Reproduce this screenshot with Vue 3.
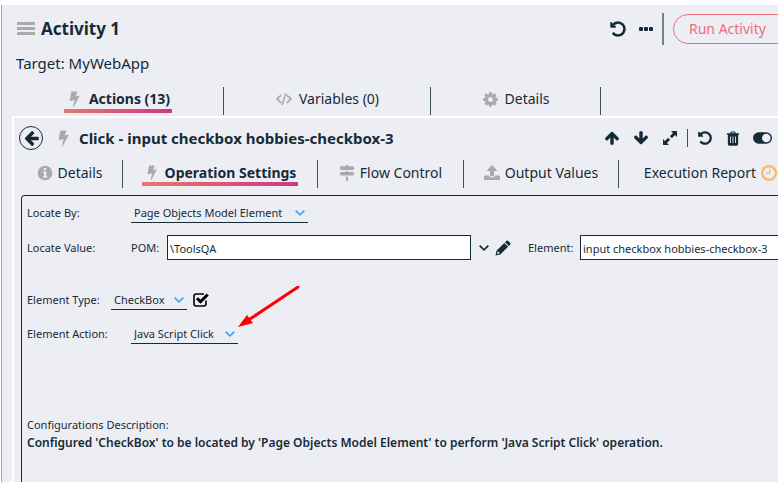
<script setup>
import { h, ref } from 'vue'

const icons = {
  bars: [18, 14, 'M0 0h18v3H0zM0 5h18v3H0zM0 10h18v3H0z'],
  bolt: [16, 16, 'M5.500.500h4.600q.700 0 .500.600L9 5l3.200-.6q.7 0 .4.700L7.200 15.300q-.6.600-.7-.2L8 8.400l-3.900.9q-.7 0-.6-.6L4.900 1q.1-.5.600-.5z'],
  undo: [1792, 1792, 'M1664 896q0 156-61 298t-164 245-245 164-298 61q-172 0-327-72.5t-264-204.5q-7-10-6.5-22.5t8.5-20.5l137-138q10-9 25-9 16 2 23 12 73 95 179 147t225 52q104 0 198.5-40.5t163.5-109.5 109.5-163.5 40.5-198.5-40.5-198.5-109.5-163.5-163.5-109.5-198.5-40.5q-98 0-188 35.5t-160 101.5l137 138q31 30 14 69-17 40-59 40h-448q-26 0-45-19t-19-45v-448q0-42 40-59 39-17 69 14l130 129q107-101 244.5-156.5t284.5-55.5q156 0 298 61t245 164 164 245 61 298z'],
  dots: [14, 4, 'M1 0h2q1 0 1 1v2q0 1-1 1H1Q0 4 0 3V1Q0 0 1 0zM6 0h2q1 0 1 1v2q0 1-1 1H6Q5 4 5 3V1Q5 0 6 0zM11 0h2q1 0 1 1v2q0 1-1 1h-2q-1 0-1-1V1q0-1 1-1z'],
  cog: [1792, 1792, 'M1152 896q0-106-75-181t-181-75-181 75-75 181 75 181 181 75 181-75 75-181zm512-109v222q0 12-8 23t-20 13l-185 28q-19 54-39 91 35 50 107 138 10 12 10 25t-9 23q-27 37-99 108t-94 71q-12 0-26-9l-138-108q-44 23-91 38-16 136-29 186-7 28-36 28h-222q-14 0-24.5-8.5t-11.5-21.5l-28-184q-49-16-90-37l-141 107q-10 9-25 9-14 0-25-11-126-114-165-168-7-10-7-23 0-12 8-23 15-21 51-66.5t54-70.5q-27-50-41-99l-183-27q-13-2-21-12.5t-8-23.5v-222q0-12 8-23t19-13l186-28q14-46 39-92-40-57-107-138-10-12-10-24 0-10 9-23 26-36 98.5-107.5t94.5-71.5q13 0 26 10l138 107q44-23 91-38 16-136 29-186 7-28 36-28h222q14 0 24.5 8.5t11.5 21.5l28 184q49 16 90 37l142-107q9-9 24-9 13 0 25 10 129 119 165 170 7 8 7 22 0 12-8 23-15 21-51 66.5t-54 70.5q26 50 41 98l183 28q13 2 21 12.5t8 23.5z'],
  code: [18, 14, 'M5.600 2.600l1.100 1.100L3.200 7l3.500 3.300-1.100 1.100L.7 7zM12.400 2.600l-1.100 1.100L14.800 7l-3.500 3.300 1.100 1.100L17.300 7zM10.200.8l1.500.4-3.900 12-1.500-.4z'],
  up: [1792, 1792, 'M1675 971q0 51-37 90l-75 75q-38 38-91 38-54 0-90-38l-294-293v704q0 52-37.5 84.5t-90.5 32.5h-128q-53 0-90.5-32.5t-37.5-84.5v-704l-294 293q-36 38-90 38t-90-38l-75-75q-38-38-38-90 0-53 38-91l651-651q35-37 90-37 54 0 91 37l651 651q37 39 37 91z'],
  expand: [16, 16, 'M9 1h5.500q.5 0 .5.500V7l-2-1.900-3.100 3.100-2-2L11 3zM7 15H1.500Q1 15 1 14.500V9l2 1.900 3.100-3.100 2 2L5 13z'],
  trash: [14, 16, 'M4 2.500L4.800.800Q5 .400 5.500.400h3q.5 0 .7.400L10 2.500h3.500v1.400h-1v9.700q0 2-1.700 2H3.200q-1.700 0-1.700-2V3.900h-1V2.500zM5.300 2.500h3.400l-.5-1H5.800zM3.800 5.800v7h.9v-7zM6.500 5.800v7h.9v-7zM9.300 5.800v7h.9v-7z'],
  toggle: [20, 12, 'M6 0h8a6 6 0 0 1 0 12H6A6 6 0 0 1 6 0zM14 1.500a4.500 4.500 0 1 0 0 9 4.500 4.500 0 0 0 0-9z'],
  info: [16, 16, 'M8 .700a7.300 7.300 0 1 0 0 14.600A7.300 7.300 0 0 0 8 .700zM6.900 3h2.300v2.200H6.900zM6 6.500h3.300v4.700h1v1.600H6v-1.600h1V8H6z'],
  signs: [16, 16, 'M7 0h2v1.300h5L15.700 3.200 14 5H1.300V1.300H7zM7 5.900h2v1h5.700v3.700H2L.3 8.700 2 6.900h5zM7 11.500h2V16H7z'],
  upload: [16, 16, 'M8 0l5 5.200q.3.800-.6.800H10v5.200H6V6H3.600Q2.700 6 3 5.200zM1 10.500h4q.3 1.900 2 1.900h2q1.700 0 2-1.900h4q1 0 1 1V14q0 1-1 1H1q-1 0-1-1v-2.500q0-1 1-1z'],
  clock: [16, 16, 'M8 0a8 8 0 1 0 0 16A8 8 0 0 0 8 0zM8 2.200a5.800 5.800 0 1 1 0 11.600A5.800 5.800 0 0 1 8 2.200zM8 4h1.300v5H5V7.700h3z'],
  chevron: [10, 6, 'M1.300 0L5 3.700 8.700 0 10 1.300l-5 4.700-5-4.700z'],
  pencil: [16, 16, 'M11.500.8q.8-.6 1.600 0l2.200 2.300q.6.8 0 1.500L13.900 6 10 2.200zM9.300 3l3.800 3.800-7.800 7.800L.5 15.500l1-4.700zM2.600 11.500l-.5 2.400 2.400-.5v-1H3.600v-.9z'],
  checked: [16, 14, 'M3 0h8q1 0 1.800.6L11.500 2H3.200Q2 2 2 3.200v7.600Q2 12 3.200 12h7.600q1.200 0 1.200-1.200V8.500L13.700 7v4q0 2.800-2.700 2.800H3Q.2 13.800.2 11V3Q.2 0 3 0zM3.200 5.700L5.300 3.600 7.600 5.900 13.600.4 15.900 2.600 7.600 10.900z']
}

const Icon = ({ name }) => {
  const [w, ht, d] = icons[name]
  return h('svg', { viewBox: `0 0 ${w} ${ht}`, fill: 'currentColor', 'aria-hidden': 'true' }, [
    h('path', { d, 'fill-rule': 'evenodd' })
  ])
}
Icon.props = ['name']

const activityTabs = [
  { icon: 'bolt', label: 'Actions (13)', active: true },
  { icon: 'code', label: 'Variables (0)' },
  { icon: 'cog', label: 'Details' }
]
const actionTabs = [
  { icon: 'info', label: 'Details' },
  { icon: 'bolt', label: 'Operation Settings', active: true },
  { icon: 'signs', label: 'Flow Control' },
  { icon: 'upload', label: 'Output Values' },
  { label: 'Execution Report', trailing: 'clock' }
]

const locateBy = ref('Page Objects Model Element')
const pom = ref('\\ToolsQA')
const element = ref('input checkbox hobbies-checkbox-3')
const elementType = ref('CheckBox')
const elementAction = ref('Java Script Click')
</script>

<template>
  <main class="activity">
    <header class="head">
      <Icon name="bars" class="icon grey bars" />
      <h1>Activity 1</h1>
      <div class="head-tools">
        <button class="tool" aria-label="Undo"><Icon name="undo" class="icon i18" /></button>
        <button class="tool" aria-label="More"><Icon name="dots" class="icon dots" /></button>
        <button class="run">Run Activity</button>
      </div>
    </header>
    <p class="target">Target: MyWebApp</p>

    <nav class="tabs outer">
      <div v-for="t in activityTabs" :key="t.label" class="cell">
        <button class="tab" :class="{ active: t.active }">
          <Icon :name="t.icon" class="icon grey" :class="t.icon === 'code' ? 'i18' : 'i17'" />{{ t.label }}
        </button>
      </div>
    </nav>

    <section class="action">
      <header class="action-head">
        <button class="back" aria-label="Back"><Icon name="up" class="icon i17 left" /></button>
        <Icon name="bolt" class="icon grey i17" />
        <h2>Click - input checkbox hobbies-checkbox-3</h2>
        <div class="action-tools">
          <button class="tool" aria-label="Move up"><Icon name="up" class="icon i16" /></button>
          <button class="tool" aria-label="Move down"><Icon name="up" class="icon i16 down" /></button>
          <button class="tool" aria-label="Expand"><Icon name="expand" class="icon i16" /></button>
          <span class="rule"></span>
          <button class="tool" aria-label="Undo"><Icon name="undo" class="icon i16" /></button>
          <button class="tool" aria-label="Delete"><Icon name="trash" class="icon trash" /></button>
          <button class="tool" aria-label="Active"><Icon name="toggle" class="icon toggle" /></button>
        </div>
      </header>

      <nav class="tabs inner">
        <div v-for="t in actionTabs" :key="t.label" class="cell">
          <button class="tab" :class="{ active: t.active }">
            <Icon v-if="t.icon" :name="t.icon" class="icon grey i16" />{{ t.label }}
            <Icon v-if="t.trailing" :name="t.trailing" class="icon orange i16" />
          </button>
        </div>
      </nav>

      <form class="settings" @submit.prevent>
        <div class="row">
          <label class="name" for="locate-by">Locate By:</label>
          <span class="pick wide">
            <select id="locate-by" v-model="locateBy"><option>Page Objects Model Element</option></select>
            <Icon name="chevron" class="icon chev blue" />
          </span>
        </div>
        <div class="row values">
          <span class="name">Locate Value:</span>
          <label class="pom" for="pom">POM:</label>
          <input id="pom" v-model="pom" class="box pom-box" type="text">
          <button class="tool open" type="button" aria-label="Open list"><Icon name="chevron" class="icon chev" /></button>
          <button class="tool edit" type="button" aria-label="Edit"><Icon name="pencil" class="icon i16" /></button>
          <label class="elem" for="element">Element:</label>
          <input id="element" v-model="element" class="box elem-box" type="text">
        </div>
        <div class="row type">
          <label class="name short" for="type">Element Type:</label>
          <span class="pick small">
            <select id="type" v-model="elementType"><option>CheckBox</option></select>
            <Icon name="chevron" class="icon chev blue" />
          </span>
          <svg class="icon checked" viewBox="0 0 16 14" fill="none" stroke="#000" aria-hidden="true">
            <path d="M13 7.500V11q0 2-2 2H3q-2 0-2-2V3q0-2 2-2h8" stroke-width="1.600" />
            <path d="M4 5.200l3.500 3.500L14.700 1.500" stroke-width="3" />
          </svg>
        </div>
        <div class="row">
          <label class="name" for="act">Element Action:</label>
          <span class="pick medium">
            <select id="act" v-model="elementAction"><option>Java Script Click</option></select>
            <Icon name="chevron" class="icon chev blue" />
            <svg class="pointer" viewBox="0 0 62 42" aria-hidden="true">
              <path d="M60 1L12 33" stroke="#f00" stroke-width="3" stroke-linecap="round" />
              <path d="M0 41L9 29 15 37z" fill="#f00" />
            </svg>
          </span>
        </div>
        <div class="summary">
          <p>Configurations Description:</p>
          <p><strong>Configured 'CheckBox' to be located by 'Page Objects Model Element' to perform 'Java Script Click' operation.</strong></p>
        </div>
      </form>
    </section>
  </main>
</template>

<style>
body {
  background: #fff;
  overflow: hidden;
}
</style>

<style scoped>
* {
  box-sizing: border-box;
}
.activity {
  margin: 5px 0 0 1px;
  min-height: calc(100vh - 5px);
  border-left: 1px solid #a3a5aa;
  background: #edeef4;
  color: #152b37;
  font: 14px/20px "Noto Sans", "Open Sans", sans-serif;
  display: flex;
  flex-direction: column;
  overflow: hidden;
}
h1, h2, p {
  margin: 0;
}
button, input, select {
  font: inherit;
  color: inherit;
}
button {
  background: none;
  border: 0;
  padding: 0;
  white-space: nowrap;
}
.icon {
  display: block;
  flex: none;
}
.grey { color: #aaa; }
.orange { color: #fdb861; }
.blue { color: #3fa4f0; }
.i16 { width: 16px; height: 16px; }
.i17 { width: 17px; height: 17px; }
.i18 { width: 18px; height: 18px; }
.left { transform: rotate(-90deg); }
.down { transform: rotate(180deg); }
.bars { width: 18px; height: 14px; }
.dots { width: 14px; height: 4px; }
.trash { width: 14px; height: 15px; }
.toggle { width: 19px; height: 12px; }
.chev { width: 10px; height: 6px; }
.checked { width: 16px; height: 14px; }

.head {
  display: flex;
  align-items: center;
  height: 48px;
  padding-left: 15px;
  gap: 6px;
}
h1 {
  font-size: 17px;
  line-height: 24px;
}
.head-tools {
  display: flex;
  align-items: center;
  gap: 12px;
  margin: 0 -25px 0 auto;
}
.run {
  position: relative;
  height: 30px;
  width: 130px;
  margin-left: 8px;
  padding-left: 15px;
  border: 1px solid #f16c72;
  border-radius: 15px;
  color: #f16c72;
  text-align: left;
}
.run::before {
  content: "";
  position: absolute;
  left: -12px;
  top: -2px;
  height: 32px;
  border-left: 2px solid #74828a;
}
.target {
  padding-left: 14px;
  height: 33px;
  font-size: 15px;
}
.tabs {
  display: grid;
}
.outer {
  grid-template-columns: 211px 207px 170px;
  padding-left: 11px;
  height: 30px;
}
.inner {
  grid-template-columns: 106px 195px 146px 155px auto;
  padding-left: 3px;
  height: 28px;
}
.cell {
  display: flex;
  justify-content: center;
  height: 28px;
  border-right: 1px solid #3c505b;
}
.outer .cell {
  margin-top: 1px;
}
.inner .cell:last-child {
  border-right: 0;
  padding-right: 1px;
  justify-content: flex-end;
}
.tab {
  display: flex;
  align-items: center;
  justify-content: center;
  gap: 5px;
  height: 26px;
  border-bottom: 4px solid transparent;
  padding-top: 3px;
}
.outer .tab {
  gap: 6px;
  padding-top: 2px;
}
.tab.active {
  padding-left: 2px;
  padding-right: 2px;
  font-weight: 700;
  border-image: linear-gradient(90deg, #e6796d, #cf3585) 1;
  border-image-width: 0 0 4px;
}
.action {
  flex: 1;
  display: flex;
  flex-direction: column;
  margin-left: 10px;
  border: solid #fff;
  border-width: 2px 0 0 2px;
}
.action-head {
  display: flex;
  align-items: center;
  height: 40px;
  margin-bottom: 2px;
  padding-left: 5px;
}
.back {
  display: grid;
  place-items: center;
  width: 24px;
  height: 24px;
  margin-right: 12px;
  border: 1px solid #152b37;
  border-radius: 50%;
}
h2 {
  margin-left: 7px;
  font-size: 15px;
  line-height: 20px;
  white-space: nowrap;
}
.action-tools {
  display: flex;
  align-items: center;
  gap: 13px;
  margin-left: auto;
  padding-right: 6px;
}
.rule {
  width: 1px;
  height: 18px;
  margin: 0 -4px;
  background: #3c505b;
}
.settings {
  flex: 1;
  margin: 7px -10px 0 7px;
  border: 1px solid #152b37;
  border-bottom: 0;
  border-radius: 4px 4px 0 0;
  padding: 7px 0 0 5px;
  font-size: 11px;
  line-height: 18px;
}
.row {
  display: flex;
  align-items: center;
  height: 20px;
  white-space: nowrap;
}
.name {
  flex: 0 0 104px;
}
.short {
  flex-basis: 84px;
}
.values {
  height: 25px;
  margin: 12px 0 30px;
}
.type {
  margin-bottom: 14px;
}
.pick {
  position: relative;
  display: flex;
  align-items: center;
  justify-content: flex-end;
  height: 20px;
  padding-right: 3px;
}
.wide { width: 177px; }
.medium { width: 107px; }
.small { width: 76px; margin-right: 6px; }
.pick select {
  position: absolute;
  inset: 0;
  width: 100%;
  appearance: none;
  background: none;
  border: 0;
  border-bottom: 1px solid #152b37;
  border-radius: 0;
  padding: 0 0 0 3px;
}
.pick .chev {
  margin-bottom: 1px;
}
.pointer {
  position: absolute;
  left: 107px;
  top: -38px;
  width: 62px;
  height: 42px;
}
.box {
  height: 25px;
  border: 1px solid #152b37;
  border-radius: 0;
  background: #fff;
  padding: 2px 2px 0;
}
.pom { flex: 0 0 36px; }
.pom-box { flex: 1 1 auto; min-width: 60px; }
.open { margin: 0 6px 0 8px; }
.edit { margin-right: 17px; }
.elem { flex: 0 0 52px; }
.elem-box { flex: 0 0 207px; }
.summary {
  margin-top: 72px;
}
.summary strong {
  font-size: 12px;
  font-weight: 600;
}
</style>
